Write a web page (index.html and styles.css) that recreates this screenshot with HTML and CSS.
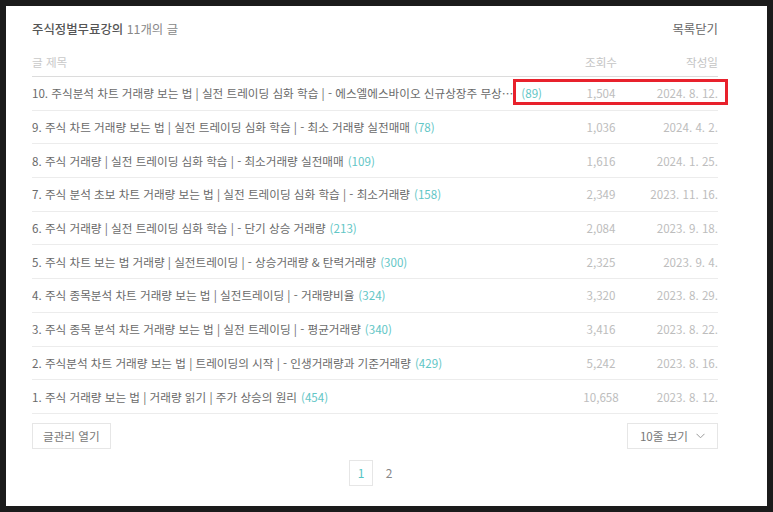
FILE: index.html
```html
<!DOCTYPE html>
<html lang="ko">
<head>
<meta charset="utf-8">
<title>주식정벌무료강의</title>
<link rel="stylesheet" href="styles.css">
</head>
<body>
<div class="panel">
  <div class="top">
    <div class="cat"><strong>주식정벌무료강의</strong> 11개의 글</div>
    <div class="close">목록닫기</div>
  </div>
  <div class="head">
    <div class="c-title">글 제목</div>
    <div class="c-views">조회수</div>
    <div class="c-date">작성일</div>
  </div>
  <ul class="list">
    <li class="row current">
      <div class="c-title"><span class="t">10. 주식분석 차트 거래량 보는 법 | 실전 트레이딩 심화 학습 | - 에스엘에스바이오 신규상장주 무상증자 분석</span><span class="n">(89)</span></div>
      <div class="c-views">1,504</div>
      <div class="c-date">2024. 8. 12.</div>
      <span class="mark"></span>
    </li>
    <li class="row">
      <div class="c-title"><span class="t">9. 주식 차트 거래량 보는 법 | 실전 트레이딩 심화 학습 | - 최소 거래량 실전매매</span><span class="n">(78)</span></div>
      <div class="c-views">1,036</div>
      <div class="c-date">2024. 4. 2.</div>
    </li>
    <li class="row">
      <div class="c-title"><span class="t">8. 주식 거래량 | 실전 트레이딩 심화 학습 | - 최소거래량 실전매매</span><span class="n">(109)</span></div>
      <div class="c-views">1,616</div>
      <div class="c-date">2024. 1. 25.</div>
    </li>
    <li class="row">
      <div class="c-title"><span class="t">7. 주식 분석 초보 차트 거래량 보는 법 | 실전 트레이딩 심화 학습 | - 최소거래량</span><span class="n">(158)</span></div>
      <div class="c-views">2,349</div>
      <div class="c-date">2023. 11. 16.</div>
    </li>
    <li class="row">
      <div class="c-title"><span class="t">6. 주식 거래량 | 실전 트레이딩 심화 학습 | - 단기 상승 거래량</span><span class="n">(213)</span></div>
      <div class="c-views">2,084</div>
      <div class="c-date">2023. 9. 18.</div>
    </li>
    <li class="row">
      <div class="c-title"><span class="t">5. 주식 차트 보는 법 거래량 | 실전트레이딩 | - 상승거래량 &amp; 탄력거래량</span><span class="n">(300)</span></div>
      <div class="c-views">2,325</div>
      <div class="c-date">2023. 9. 4.</div>
    </li>
    <li class="row">
      <div class="c-title"><span class="t">4. 주식 종목분석 차트 거래량 보는 법 | 실전트레이딩 | - 거래량비율</span><span class="n">(324)</span></div>
      <div class="c-views">3,320</div>
      <div class="c-date">2023. 8. 29.</div>
    </li>
    <li class="row">
      <div class="c-title"><span class="t">3. 주식 종목 분석 차트 거래량 보는 법 | 실전 트레이딩 | - 평균거래량</span><span class="n">(340)</span></div>
      <div class="c-views">3,416</div>
      <div class="c-date">2023. 8. 22.</div>
    </li>
    <li class="row">
      <div class="c-title"><span class="t">2. 주식분석 차트 거래량 보는 법 | 트레이딩의 시작 | - 인생거래량과 기준거래량</span><span class="n">(429)</span></div>
      <div class="c-views">5,242</div>
      <div class="c-date">2023. 8. 16.</div>
    </li>
    <li class="row">
      <div class="c-title"><span class="t">1. 주식 거래량 보는 법 | 거래량 읽기 | 주가 상승의 원리</span><span class="n">(454)</span></div>
      <div class="c-views">10,658</div>
      <div class="c-date">2023. 8. 12.</div>
    </li>
  </ul>
  <div class="tools">
    <button class="btn">글관리 열기</button>
    <button class="btn select">10줄 보기
      <svg class="chev" width="9" height="6" viewBox="0 0 9 6"><polyline points="0.5,0.8 4.5,4.8 8.5,0.8" fill="none" stroke="#9a9a9a" stroke-width="1"/></svg>
    </button>
  </div>
  <div class="paging">
    <span class="page on">1</span>
    <span class="page">2</span>
  </div>
</div>
</body>
</html>
```

FILE: styles.css
```css
* { box-sizing: border-box; }
html, body { margin: 0; padding: 0; }
body {
  background: #1b1b1b;
  padding: 6px;
  width: 773px;
  height: 512px;
  font-family: "Noto Sans CJK KR", "Noto Sans", sans-serif;
  font-size: 11.6px;
  color: #666;
}
.panel {
  background: #fff;
  width: 761px;
  height: 500px;
  padding: 14px 49px 0 26px;
}
.top {
  display: flex;
  justify-content: space-between;
  align-items: center;
  height: 18px;
  line-height: 18px;
}
.cat { color: #888; font-size: 12.4px; }
.cat strong { color: #555; font-weight: 500; }
.close { color: #666; font-size: 12.4px; }

.head, .row {
  display: flex;
  align-items: center;
}
.head {
  margin-top: 10px;
  height: 29px;
  border-bottom: 1px solid #dcdcdc;
  color: #c4c4c4;
}
.head .c-title { color: #c9c9c9; }
.c-title {
  flex: 1;
  min-width: 0;
  display: flex;
  padding-right: 30px;
}
.c-views { width: 58px; text-align: center; flex-shrink: 0; }
.c-date { width: 88px; text-align: right; flex-shrink: 0; }

.list { list-style: none; margin: 0; padding: 0; }
.row {
  position: relative;
  height: 33.7px;
  border-bottom: 1px solid #ececec;
}
.row .t {
  white-space: nowrap;
  overflow: hidden;
  text-overflow: ellipsis;
  min-width: 0;
  color: #6a6a6a;
}
.row .n { flex-shrink: 0; margin-left: 4px; color: #62c6c6; }
.row .c-views, .row .c-date { color: #bdbdbd; }

.mark {
  position: absolute;
  left: 481px;
  right: -10px;
  top: 2px;
  height: 26px;
  border: 3px solid #e8212c;
}

.tools {
  display: flex;
  justify-content: space-between;
  margin-top: 9px;
}
.btn {
  font: inherit;
  color: #777;
  background: #fff;
  border: 1px solid #e6e6e6;
  height: 26px;
  padding: 0 10px;
  cursor: pointer;
}
.select {
  display: flex;
  align-items: center;
  gap: 8px;
  padding: 0 12px 0 12px;
}
.paging {
  display: flex;
  justify-content: center;
  gap: 4px;
  margin-top: 11px;
}
.page {
  width: 24px;
  height: 26px;
  line-height: 24px;
  text-align: center;
  color: #888;
  font-size: 12px;
  border: 1px solid transparent;
}
.page.on { color: #55c4c4; border-color: #e6e6e6; }
```
